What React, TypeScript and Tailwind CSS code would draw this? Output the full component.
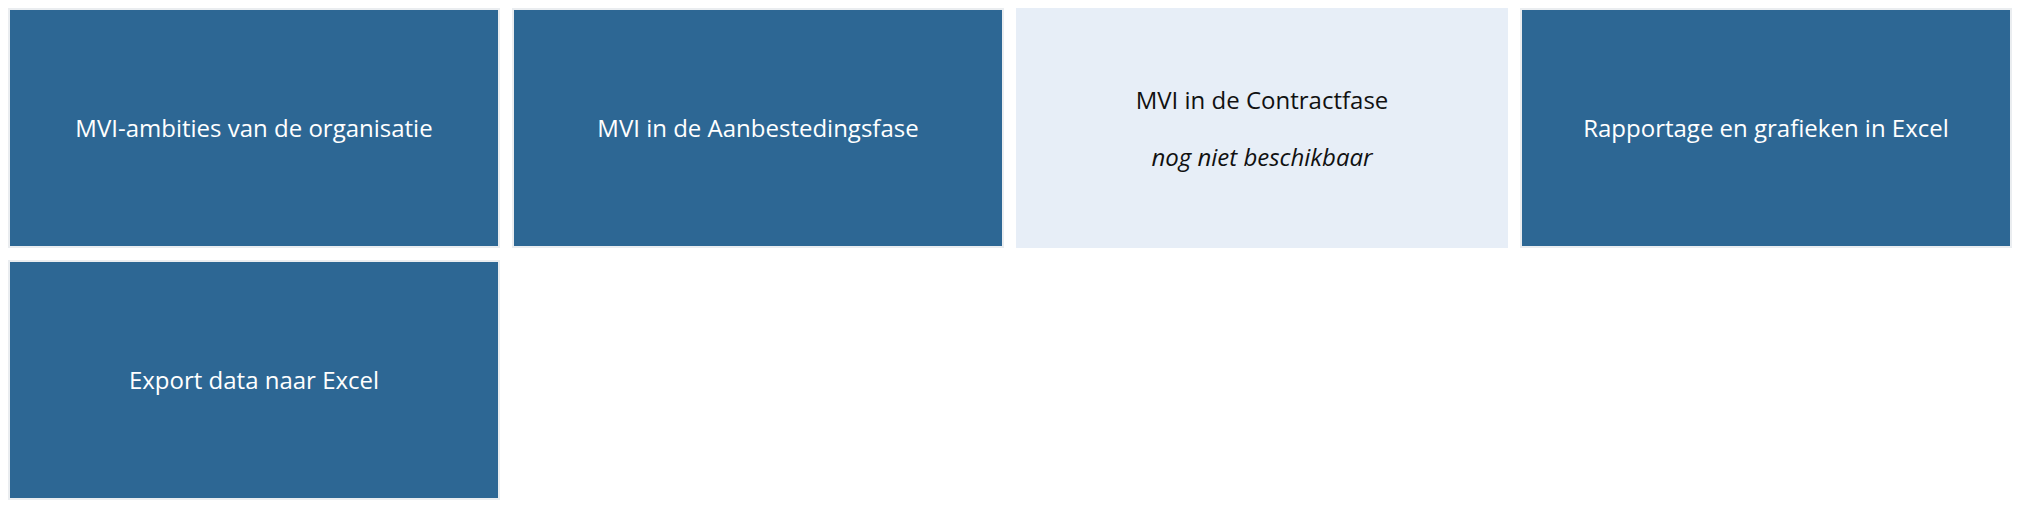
import React from "react";

type Tile = { title: string; note?: string; disabled?: boolean };

const tiles: Tile[] = [
  { title: "MVI-ambities van de organisatie" },
  { title: "MVI in de Aanbestedingsfase" },
  { title: "MVI in de Contractfase", note: "nog niet beschikbaar", disabled: true },
  { title: "Rapportage en grafieken in Excel" },
  { title: "Export data naar Excel" },
];

function TileCard({ tile }: { tile: Tile }) {
  if (tile.disabled) {
    return (
      <div className="flex h-[240px] flex-col items-center justify-center gap-[31px] border-2 border-[#e7eef7] bg-[#e7eef7] text-[#111111]">
        <span className="leading-[26px]">{tile.title}</span>
        {tile.note && <span className="italic leading-[26px]">{tile.note}</span>}
      </div>
    );
  }
  return (
    <a
      href="#"
      className="flex h-[240px] items-center justify-center border-2 border-[#eaedf0] bg-[#2d6794] text-white"
    >
      <span className="leading-[26px]">{tile.title}</span>
    </a>
  );
}

export default function App() {
  return (
    <div
      className="grid grid-cols-4 gap-3 bg-white p-2 text-[24px] font-medium"
      style={{ fontFamily: '"Open Sans", "Noto Sans", sans-serif' }}
    >
      {tiles.map((t) => (
        <TileCard key={t.title} tile={t} />
      ))}
    </div>
  );
}
